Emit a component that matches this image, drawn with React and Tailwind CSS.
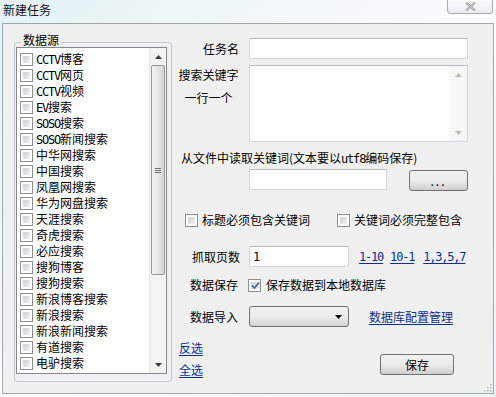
import React from 'react';

const sources = [
  'CCTV博客', 'CCTV网页', 'CCTV视频', 'EV搜索', 'SOSO搜索', 'SOSO新闻搜索',
  '中华网搜索', '中国搜索', '凤凰网搜索', '华为网盘搜索', '天涯搜索', '奇虎搜索',
  '必应搜索', '搜狗博客', '搜狗搜索', '新浪博客搜索', '新浪搜索', '新浪新闻搜索',
  '有道搜索', '电驴搜索'
];

// ascii runs get a narrow mono face, like the old SimSun look
const Txt = ({ text }) =>
  text.split(/([A-Za-z0-9,\-]+)/).filter(Boolean).map((p, i) =>
    /[A-Za-z0-9]/.test(p)
      ? <span key={i} className="font-['DejaVu_Sans_Mono',monospace] text-[12px] tracking-[-1.2px]">{p}</span>
      : <span key={i}>{p}</span>
  );

const Check = ({ checked }) => (
  <span className="w-[13px] h-[13px] shrink-0 flex border border-[#8e8f8f] bg-white p-[2px]">
    <span className="flex-1 flex items-center justify-center bg-gradient-to-br from-[#c9ccd1] to-[#f4f4f4]">
      {checked && (
        <svg width="9" height="9" viewBox="0 0 9 9">
          <path d="M1 4.5 L3.5 7 L8 1.5" fill="none" stroke="#4c6294" strokeWidth="1.6" />
        </svg>
      )}
    </span>
  </span>
);

const Arrow = ({ up, color = '#3b3b3b' }) => (
  <svg width="7" height="4" viewBox="0 0 7 4">
    <path d={up ? 'M0 4 L3.5 0 L7 4 Z' : 'M0 0 L7 0 L3.5 4 Z'} fill={color} />
  </svg>
);

const Btn = ({ children, className }) => (
  <button className={`h-[21px] rounded-[3px] border border-[#707070] bg-gradient-to-b from-[#f2f2f2] via-[#ebebeb] to-[#cfcfcf] text-[12px] leading-[14px] text-black flex items-center justify-center ${className}`}>
    {children}
  </button>
);

const Link = ({ children, className = '' }) => (
  <span className={`text-[#0b2f8f] underline underline-offset-[2px] cursor-pointer ${className}`}>{children}</span>
);

export default function App() {
  return (
    <div className="w-[496px] h-[397px] overflow-hidden flex flex-col bg-gradient-to-br from-[#e4f1f5] via-[#fbfcfd] to-[#eef5f8] font-['Noto_Sans_CJK_SC',sans-serif] text-[12px] text-black">
      {/* title bar */}
      <div className="h-[23px] flex items-start justify-between shrink-0">
        <span className="pl-[3px] pt-[3px] leading-[14px] text-[#111]">新建任务</span>
        <div className="mr-[3px] w-[46px] h-[14px] rounded-b-[4px] border border-t-0 border-[#a9aeb5] bg-gradient-to-b from-[#fbfbfb] to-[#e9ecef] flex items-center justify-center">
          <svg width="11" height="9" viewBox="0 0 11 9">
            <path d="M1 0.5 L10 8.5 M10 0.5 L1 8.5" stroke="#8d8f93" strokeWidth="2.2" />
            <path d="M1 0.5 L10 8.5 M10 0.5 L1 8.5" stroke="#f2f2f2" strokeWidth="0.8" />
          </svg>
        </div>
      </div>

      {/* client area */}
      <div className="mx-[2px] h-[371px] shrink-0 border border-[#a3a7ab] bg-[#f0f0f0] flex relative">
        {/* data source group */}
        <fieldset className="ml-[11px] mt-[9px] w-[158px] h-[349px] border border-[#c4c8cc] rounded-[3px] pl-[1px] pr-[4px] pb-[7px]">
          <legend className="ml-[5px] px-[2px] leading-[14px] pb-[4px]">数据源</legend>
          <div className="-mt-[4px] h-[327px] border border-[#828790] bg-white flex">
            <div className="flex-1 pt-[3px] pl-[3px] flex flex-col">
              {sources.map(s => (
                <div key={s} className="h-[16px] flex items-center gap-[3px] leading-[14px] whitespace-nowrap">
                  <Check />
                  <span><Txt text={s} /></span>
                </div>
              ))}
            </div>
            <div className="w-[17px] flex flex-col bg-[#f3f3f3] border-l border-[#e6e6e6]">
              <div className="h-[17px] flex items-center justify-center"><Arrow up /></div>
              <div className="flex-1 px-[1px]">
                <div className="h-[210px] rounded-[2px] border border-[#979797] bg-gradient-to-r from-[#f4f4f4] via-[#e6e6e6] to-[#d2d2d2] flex flex-col items-center justify-center gap-[1px]">
                  <span className="w-[6px] h-[1px] bg-[#6e6e6e]" />
                  <span className="w-[6px] h-[1px] bg-[#6e6e6e]" />
                  <span className="w-[6px] h-[1px] bg-[#6e6e6e]" />
                </div>
              </div>
              <div className="h-[17px] flex items-center justify-center"><Arrow /></div>
            </div>
          </div>
        </fieldset>

        {/* form */}
        <div className="ml-[5px] w-[310px] pt-[14px] flex flex-col leading-[14px]">
          <div className="flex items-center">
            <span className="w-[63px] text-right pr-[1px]">任务名</span>
            <div className="ml-[9px] w-[219px] h-[21px] bg-white border border-[#d5d9df] border-t-[#b5b9c0]" />
          </div>

          <div className="mt-[6px] flex">
            <div className="w-[63px] flex flex-col items-center pt-[3px] gap-[9px]">
              <span>搜索关键字</span>
              <span>一行一个</span>
            </div>
            <div className="ml-[9px] w-[219px] h-[77px] bg-white border border-[#d5d9df] border-t-[#b5b9c0] flex justify-end">
              <div className="w-[17px] flex flex-col justify-between bg-[#f7f7f7]">
                <div className="h-[17px] flex items-center justify-center"><Arrow up color="#b9b9b9" /></div>
                <div className="h-[17px] flex items-center justify-center"><Arrow color="#b9b9b9" /></div>
              </div>
            </div>
          </div>

          <div className="mt-[9px] pl-[4px]"><Txt text="从文件中读取关键词(文本要以utf8编码保存)" /></div>

          <div className="mt-[3px] flex items-start">
            <div className="ml-[72px] w-[138px] h-[21px] bg-white border border-[#d5d9df] border-t-[#b5b9c0]" />
            <Btn className="ml-[22px] mt-[1px] w-[59px] text-[#777] tracking-[2px]">...</Btn>
          </div>

          <div className="mt-[22px] pl-[8px] flex items-center">
            <Check />
            <span className="ml-[4px]">标题必须包含关键词</span>
            <span className="ml-[27px]"><Check /></span>
            <span className="ml-[4px]">关键词必须完整包含</span>
          </div>

          <div className="mt-[19px] flex items-center">
            <span className="w-[63px] text-right">抓取页数</span>
            <div className="ml-[9px] w-[100px] h-[21px] bg-white border border-[#d5d9df] border-t-[#b5b9c0] flex items-center pl-[3px]">
              <Txt text="1" />
            </div>
            <Link className="ml-[10px]"><Txt text="1-10" /></Link>
            <Link className="ml-[7px]"><Txt text="10-1" /></Link>
            <Link className="ml-[9px]"><Txt text="1,3,5,7" /></Link>
          </div>

          <div className="mt-[10px] flex items-center h-[16px]">
            <span className="w-[63px] text-right pr-[2px]">数据保存</span>
            <span className="ml-[8px]"><Check checked /></span>
            <span className="ml-[5px]">保存数据到本地数据库</span>
          </div>

          <div className="mt-[13px] flex items-center">
            <span className="w-[63px] text-right pr-[2px]">数据导入</span>
            <div className="ml-[9px] w-[100px] h-[21px] rounded-[3px] border border-[#707070] bg-gradient-to-b from-[#f2f2f2] via-[#ebebeb] to-[#d4d4d4] flex items-center justify-end pr-[6px]">
              <Arrow color="#000" />
            </div>
            <Link className="ml-[20px]">数据库配置管理</Link>
          </div>

          <div className="mt-[14px] flex justify-between">
            <div className="pl-[2px] flex flex-col gap-[8px]">
              <Link>反选</Link>
              <Link>全选</Link>
            </div>
            <Btn className="mt-[13px] mr-[33px] w-[74px]">保存</Btn>
          </div>
        </div>

        {/* size grip */}
        <svg className="absolute right-[1px] bottom-[1px]" width="10" height="10" viewBox="0 0 10 10">
          {[[8, 2], [8, 5], [5, 5], [8, 8], [5, 8], [2, 8]].map(([x, y]) => (
            <rect key={`${x}-${y}`} x={x} y={y} width="1.5" height="1.5" fill="#b5b5b5" />
          ))}
        </svg>
      </div>
    </div>
  );
}
